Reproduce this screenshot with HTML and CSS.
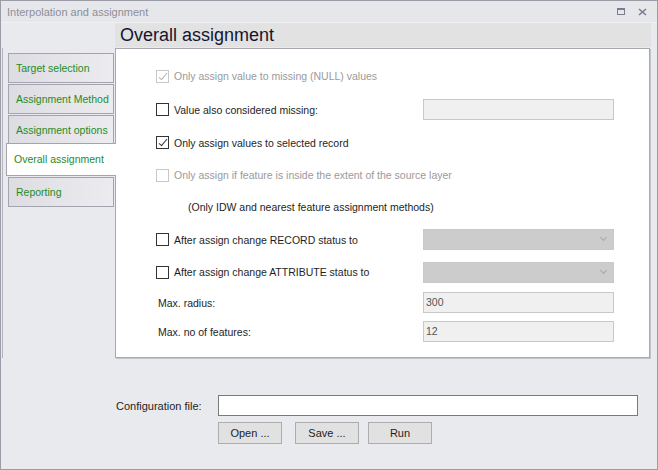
FILE: index.html
```html
<!DOCTYPE html>
<html lang="en">

<head>
  <meta charset="UTF-8">
  <title>Interpolation and assignment</title>
  <link rel="stylesheet" href="styles.css">
</head>

<body>
  <div class="window">
    <div class="titlebar">
      <span class="title">Interpolation and assignment</span>
      <div class="controls">
        <span class="max-icon"></span>
        <svg class="close-icon" width="9" height="8" viewBox="0 0 9 8">
          <path d="M1 1 L8 7 M8 1 L1 7" stroke="#7c7c8c" stroke-width="1.6" fill="none" />
        </svg>
      </div>
    </div>

    <div class="page-header">Overall assignment</div>

    <div class="main">
      <div class="tabs">
        <div class="tab">Target selection</div>
        <div class="tab">Assignment Method</div>
        <div class="tab">Assignment options</div>
        <div class="tab active">Overall assignment</div>
        <div class="tab">Reporting</div>
      </div>

      <div class="panel">
        <div class="row">
          <label class="check wide disabled"><span class="box checked"></span>Only assign value to missing (NULL) values</label>
        </div>
        <div class="row">
          <label class="check"><span class="box"></span>Value also considered missing:</label>
          <div class="field"></div>
        </div>
        <div class="row">
          <label class="check wide"><span class="box checked"></span>Only assign values to selected record</label>
        </div>
        <div class="row">
          <label class="check wide disabled"><span class="box"></span>Only assign if feature is inside the extent of the source layer</label>
        </div>
        <div class="row">
          <span class="note">(Only IDW and nearest feature assignment methods)</span>
        </div>
        <div class="row">
          <label class="check"><span class="box"></span>After assign change RECORD status to</label>
          <div class="combo"><span class="chevron"></span></div>
        </div>
        <div class="row">
          <label class="check"><span class="box"></span>After assign change ATTRIBUTE status to</label>
          <div class="combo"><span class="chevron"></span></div>
        </div>
        <div class="row">
          <span class="label">Max. radius:</span>
          <div class="field">300</div>
        </div>
        <div class="row">
          <span class="label">Max. no of features:</span>
          <div class="field">12</div>
        </div>
      </div>
    </div>

    <div class="config">
      <div class="config-row">
        <span class="config-label">Configuration file:</span>
        <div class="config-input"></div>
      </div>
      <div class="buttons">
        <button class="btn">Open ...</button>
        <button class="btn">Save ...</button>
        <button class="btn">Run</button>
      </div>
    </div>
  </div>
</body>

</html>
```

FILE: styles.css
```css
/* Global */
* {
  box-sizing: border-box;
}

body {
  margin: 0;
  font-family: 'Liberation Sans', Arial, sans-serif;
  font-size: 10.5px;
  color: #1e1e1e;
}

.window {
  width: 658px;
  height: 470px;
  border: 1px solid #9c9ca8;
  background: #e9eaee;
  display: flex;
  flex-direction: column;
}

/* Title bar */
.titlebar {
  height: 22px;
  flex-shrink: 0;
  display: flex;
  align-items: center;
  justify-content: space-between;
  padding: 0 10px 0 6px;
  background: #e6e7eb;
  border-bottom: 1px solid #f0f0f3;
}

.title {
  color: #8e8e96;
  font-size: 11px;
}

.controls {
  display: flex;
  align-items: center;
  gap: 13px;
}

.max-icon {
  width: 8px;
  height: 7px;
  border: 1px solid #7c7c8c;
  border-top-width: 2px;
}

/* Header */
.page-header {
  margin-left: 114px;
  margin-right: 6px;
  height: 24px;
  line-height: 24px;
  padding-left: 5px;
  background: #e2e2e2;
  color: #151530;
  font-size: 18px;
}

/* Tabs + panel */
.main {
  display: flex;
  margin-top: 1px;
  padding-left: 1px;
}

.tabs {
  width: 113px;
  flex-shrink: 0;
  border-left: 1px solid #b4b4bc;
  padding-top: 5px;
  display: flex;
  flex-direction: column;
  gap: 1px;
  position: relative;
  z-index: 1;
}

.tab {
  margin-left: 5px;
  margin-right: 1px;
  height: 30px;
  line-height: 28px;
  padding-left: 7px;
  border: 1px solid #a4a4ae;
  background: linear-gradient(to right, #dcdce2, #ececf0);
  color: #1f8c1f;
  white-space: nowrap;
}

.tab.active {
  margin-left: 3px;
  margin-right: -1px;
  margin-top: -3px;
  height: 33px;
  line-height: 31px;
  border-right: none;
  background: #ffffff;
}

.panel {
  width: 535px;
  height: 310px;
  flex-shrink: 0;
  background: #ffffff;
  border: 1px solid #a8a8b0;
  box-shadow: 1px 1px 0 #c4c4cc;
  padding: 10px 35px 10px 40px;
  display: grid;
  grid-template-columns: 1fr 191px;
  grid-template-rows: 34px 33px 33px 32px 32px 33px 32px 29px 29px;
}

.row {
  display: contents;
}

.check {
  display: flex;
  align-items: center;
  gap: 5px;
  grid-column: 1;
  white-space: nowrap;
}

.check.wide {
  grid-column: 1 / 3;
}

.check.disabled {
  color: #9a9a9a;
}

.box {
  width: 13px;
  height: 13px;
  flex-shrink: 0;
  border: 1px solid #333333;
  background: #ffffff;
  position: relative;
}

.box.checked::after {
  content: "";
  position: absolute;
  left: 4px;
  top: 0px;
  width: 3px;
  height: 8px;
  border: solid #333333;
  border-width: 0 1px 1px 0;
  transform: rotate(40deg);
}

.disabled .box {
  border-color: #c8c8c8;
}

.disabled .box.checked::after {
  border-color: #b4b4b4;
}

.note {
  grid-column: 1 / 3;
  align-self: center;
  padding-left: 32px;
}

.label {
  grid-column: 1;
  align-self: center;
  padding-left: 2px;
}

.field,
.combo {
  grid-column: 2;
  align-self: center;
  height: 21px;
  line-height: 19px;
  padding-left: 2px;
  border: 1px solid #c8c8c8;
  background: #f0f0f0;
  color: #555555;
}

.combo {
  background: #cccccc;
  position: relative;
}

.chevron {
  position: absolute;
  right: 7px;
  top: 5px;
  width: 5px;
  height: 5px;
  border: solid #a8a8a8;
  border-width: 0 1px 1px 0;
  transform: rotate(45deg);
}

/* Configuration */
.config {
  padding: 37px 0 0 115px;
}

.config-row {
  display: flex;
  align-items: center;
}

.config-label {
  width: 102px;
  font-size: 11px;
}

.config-input {
  width: 420px;
  height: 21px;
  border: 1px solid #7a7a7a;
  background: #ffffff;
}

.buttons {
  display: flex;
  margin: 6px 0 0 102px;
  gap: 13px;
}

.btn {
  width: 64px;
  height: 22px;
  font-family: inherit;
  font-size: 11px;
  color: #1e1e1e;
  background: #e1e1e1;
  border: 1px solid #adadad;
  padding: 0;
}

.btn:nth-child(3) {
  margin-left: -4px;
}
```
